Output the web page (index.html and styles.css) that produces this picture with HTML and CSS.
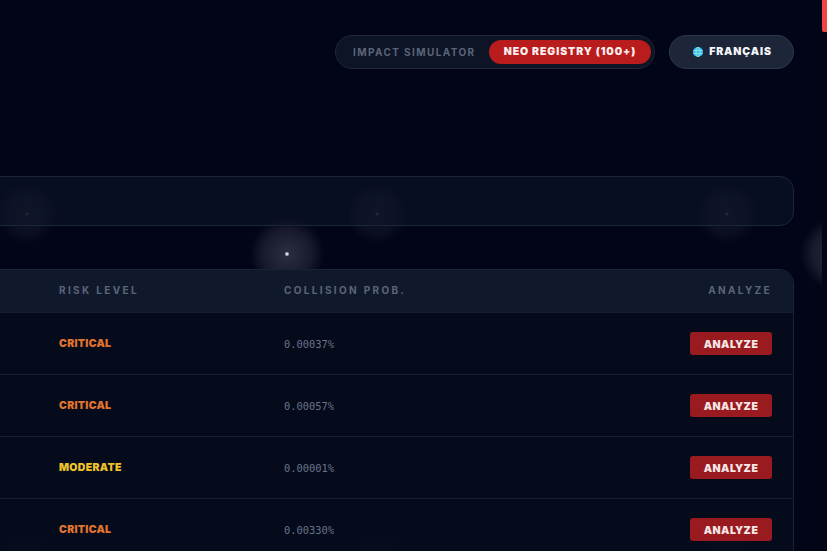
FILE: index.html
```html
<!DOCTYPE html>
<html lang="fr">
<head>
  <meta charset="UTF-8">
  <meta name="viewport" content="width=device-width, initial-scale=1.0">
  <title>NEO Registry</title>
  <link rel="stylesheet" href="styles.css">
</head>
<body>

  <div class="page">
    <!-- top navigation -->
    <div class="topbar">
      <div class="mode-switch">
        <span class="mode-link">IMPACT SIMULATOR</span>
        <span class="mode-active">NEO REGISTRY (100+)</span>
      </div>
      <button class="lang-btn">
        <svg class="globe" viewBox="0 0 10 10" aria-hidden="true">
          <circle cx="5" cy="5" r="5" fill="#38bdf8"/>
          <path d="M0.4 3.4h9.2M0.4 6.6h9.2M5 0c-2.6 2.8-2.6 7.2 0 10M5 0c2.6 2.8 2.6 7.2 0 10" fill="none" stroke="#a7f3d0" stroke-width="0.7"/>
        </svg>
        FRANÇAIS
      </button>
    </div>

    <!-- search panel -->
    <div class="filter-panel"></div>

    <!-- registry table -->
    <div class="registry">
      <div class="row row-head">
        <span>RISK LEVEL</span>
        <span>COLLISION PROB.</span>
        <span class="head-action">ANALYZE</span>
      </div>
      <div class="row">
        <span class="risk risk-critical">CRITICAL</span>
        <span class="prob">0.00037%</span>
        <button class="analyze-btn">ANALYZE</button>
      </div>
      <div class="row">
        <span class="risk risk-critical">CRITICAL</span>
        <span class="prob">0.00057%</span>
        <button class="analyze-btn">ANALYZE</button>
      </div>
      <div class="row">
        <span class="risk risk-moderate">MODERATE</span>
        <span class="prob">0.00001%</span>
        <button class="analyze-btn">ANALYZE</button>
      </div>
      <div class="row">
        <span class="risk risk-critical">CRITICAL</span>
        <span class="prob">0.00330%</span>
        <button class="analyze-btn">ANALYZE</button>
      </div>
    </div>
  </div>

  <!-- scrollbar -->
  <div class="scrollbar"><div class="scrollbar-thumb"></div></div>

</body>
</html>
```

FILE: styles.css
```css
* {
  box-sizing: border-box;
}
html, body {
  height: 100%;
}
body {
  margin: 0;
  display: flex;
  overflow: hidden;
  font-family: Inter, "Liberation Sans", sans-serif;
  background-color: #020417;
}
.page {
  flex: 1;
  min-width: 0;
  padding: 35px 28px 0 0;
  background-image:
    radial-gradient(circle at 287px 254px, #d8dbe4 0, #d8dbe4 1px, rgba(200, 205, 220, 0.2) 2.5px, rgba(200, 205, 220, 0.11) 24px, rgba(200, 205, 220, 0) 37px),
    radial-gradient(circle at 27px 214px, #3a4154 0, #3a4154 0.7px, rgba(180, 185, 210, 0.08) 2px, rgba(180, 185, 210, 0.06) 18px, rgba(180, 185, 210, 0) 30px);
  background-size: 550px 550px, 350px 350px;
}
.topbar {
  display: flex;
  justify-content: flex-end;
  gap: 14px;
}
.mode-switch {
  display: flex;
  align-items: center;
  justify-content: space-between;
  width: 320px;
  height: 34px;
  padding: 0 3px 1px 17px;
  background: #0d1426;
  border: 1px solid #1c2639;
  border-radius: 17px;
}
.mode-link {
  font-size: 10px;
  font-weight: 700;
  letter-spacing: 1.4px;
  color: #5b6579;
}
.mode-active {
  display: flex;
  align-items: center;
  justify-content: center;
  width: 162px;
  height: 24px;
  font-size: 10.5px;
  font-weight: 900;
  letter-spacing: 0.9px;
  color: #fbeeee;
  background: #b91c1c;
  border-radius: 12px;
}
.lang-btn {
  display: flex;
  align-items: center;
  justify-content: center;
  gap: 6px;
  width: 125px;
  height: 34px;
  padding: 0 0 1px 2px;
  font-family: inherit;
  font-size: 10.5px;
  font-weight: 900;
  letter-spacing: 0.9px;
  color: #f4f6fa;
  background: #1c2638;
  border: 1px solid #2c374b;
  border-radius: 17px;
}
.globe {
  width: 10px;
  height: 10px;
}
.filter-panel {
  height: 50px;
  margin: 107px 0 43px -20px;
  background: rgba(15, 23, 42, 0.55);
  border: 1px solid #1d2639;
  border-radius: 14px;
}
.registry {
  margin-left: -20px;
  background: rgba(7, 13, 30, 0.88);
  border: 1px solid #1a2336;
  border-radius: 14px 14px 0 0;
}
.row {
  display: grid;
  grid-template-columns: 225px 1fr auto;
  align-items: center;
  height: 62px;
  padding: 0 21px 0 78px;
  border-top: 1px solid #151d2f;
}
.row-head {
  height: 42px;
  padding-bottom: 2px;
  font-size: 10px;
  font-weight: 700;
  letter-spacing: 2.35px;
  color: #5b6579;
  background: #10192b;
  border-top: none;
  border-radius: 14px 14px 0 0;
}
.head-action {
  text-align: right;
}
.risk {
  padding-bottom: 1px;
  font-size: 10.5px;
  font-weight: 900;
  letter-spacing: 0.3px;
}
.risk-critical {
  color: #e0742c;
}
.risk-moderate {
  color: #eec32a;
}
.prob {
  padding-top: 1px;
  font-family: "DejaVu Sans Mono", "Liberation Mono", monospace;
  font-size: 10.4px;
  color: #687388;
}
.analyze-btn {
  width: 82px;
  height: 23px;
  padding: 1px 0 0;
  font-family: inherit;
  font-size: 10.5px;
  font-weight: 900;
  letter-spacing: 0.5px;
  color: #f6e6e6;
  background: #991b1f;
  border: none;
  border-radius: 3px;
}
.scrollbar {
  flex: none;
  width: 5px;
  background: #020417;
}
.scrollbar-thumb {
  height: 32px;
  background: #ef4444;
  border-radius: 0 0 0 2px;
}
```
